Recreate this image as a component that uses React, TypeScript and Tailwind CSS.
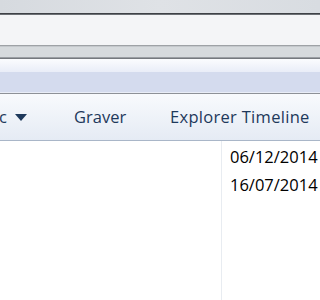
export default function App() {
  const font = { fontFamily: '"Open Sans", "Noto Sans", sans-serif' };
  return (
    <div className="w-[320px] h-[300px] overflow-hidden flex flex-col bg-white" style={font}>
      <div className="h-[13px] bg-gradient-to-r from-[#d6dadf] via-[#dfe2e6] to-[#d8dce1]" />
      <div className="h-[1px] bg-[#3e4146]" />
      <div className="h-[1px] bg-[#6c7075]" />
      <div className="h-[30px] bg-[#f4f5f7]" />
      <div className="h-[1px] bg-[#9ea2a6]" />
      <div className="h-[1px] bg-[#c4c8cc]" />
      <div className="h-[10px] bg-[#d6dadd]" />
      <div className="h-[1px] bg-[#9a9ea3]" />
      <div className="h-[1px] bg-[#75797e]" />
      <div className="h-[13px] bg-gradient-to-b from-[#fbfcfe] to-[#e9edf8]" />
      <div className="h-[20px] bg-[#d4dbee]" />
      <div className="h-[1px] bg-[#e9edf7]" />
      <div className="h-[1px] bg-[#8d9197]" />
      <div className="h-[46px] bg-gradient-to-b from-[#f8fafd] to-[#e5ebf4] flex items-center text-[#1e395b] text-[16.5px]">
        <div className="w-[74px] flex items-center">
          <span className="-ml-[1px]">c</span>
          <svg width="12" height="8" viewBox="0 0 12 8" className="ml-[8px] mt-[1px]">
            <polygon points="0,0 12,0 6,7" fill="#1e395b" />
          </svg>
        </div>
        <span className="w-[96px]">Graver</span>
        <span className="whitespace-nowrap tracking-[0.3px]">Explorer Timeline</span>
      </div>
      <div className="h-[1px] bg-[#a9b6c8]" />
      <div className="flex-1 flex">
        <div className="w-[221px]" />
        <div className="w-[1px] bg-[#e8ecf1]" />
        <div className="flex-1 pl-[8px] pt-[2px] text-[16.5px] text-black leading-[28px] whitespace-nowrap">
          <div>06/12/2014</div>
          <div>16/07/2014</div>
        </div>
      </div>
    </div>
  );
}
